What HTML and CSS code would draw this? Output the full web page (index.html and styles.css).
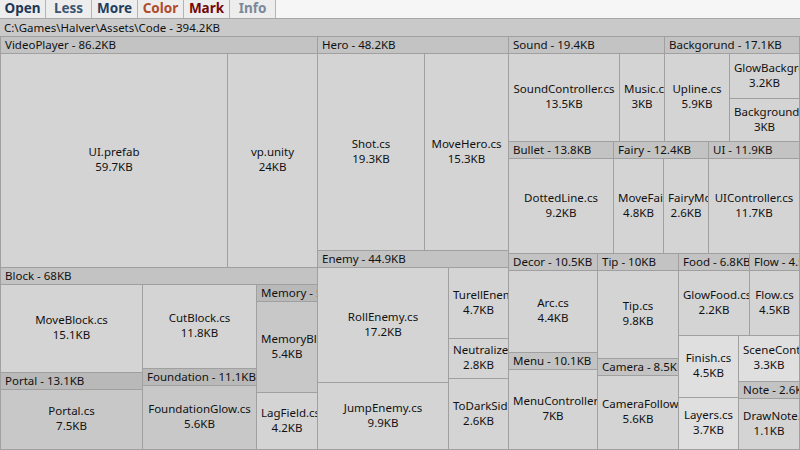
FILE: index.html
```html
<!DOCTYPE html>
<html>
<head>
<meta charset="utf-8">
<link rel="stylesheet" href="styles.css">
</head>
<body>
<div class="toolbar">
  <div class="btn c-open">Open</div>
  <div class="btn c-less">Less</div>
  <div class="btn c-more">More</div>
  <div class="btn c-color">Color</div>
  <div class="btn c-mark">Mark</div>
  <div class="btn c-info">Info</div>
</div>
<div class="path">C:\Games\Halver\Assets\Code - 394.2KB</div>
<div class="map">
  <div class="col" style="flex-basis:317px">
    <div class="grp" style="flex-basis:231px">
      <div class="hd">VideoPlayer - 86.2KB</div>
      <div class="body row">
        <div class="leaf" style="flex-basis:227px"><div>UI.prefab</div><div>59.7KB</div></div>
        <div class="leaf" style="flex-basis:90px"><div>vp.unity</div><div>24KB</div></div>
      </div>
    </div>
    <div class="grp" style="flex-basis:182px">
      <div class="hd">Block - 68KB</div>
      <div class="body row">
        <div class="col" style="flex-basis:142px">
          <div class="leaf" style="flex-basis:88px"><div>MoveBlock.cs</div><div>15.1KB</div></div>
          <div class="grp" style="flex-basis:77px">
            <div class="hd d2">Portal - 13.1KB</div>
            <div class="leaf d3"><div>Portal.cs</div><div>7.5KB</div></div>
          </div>
        </div>
        <div class="col" style="flex-basis:114px">
          <div class="leaf" style="flex-basis:84px"><div>CutBlock.cs</div><div>11.8KB</div></div>
          <div class="grp" style="flex-basis:81px">
            <div class="hd d2">Foundation - 11.1KB</div>
            <div class="leaf d3"><div>FoundationGlow.cs</div><div>5.6KB</div></div>
          </div>
        </div>
        <div class="col" style="flex-basis:61px">
          <div class="grp" style="flex-basis:108px">
            <div class="hd d2">Memory - 5.4KB</div>
            <div class="leaf d3"><div>MemoryBlock.cs</div><div>5.4KB</div></div>
          </div>
          <div class="leaf" style="flex-basis:57px"><div>LagField.cs</div><div>4.2KB</div></div>
        </div>
      </div>
    </div>
  </div>
  <div class="col" style="flex-basis:191px">
    <div class="grp" style="flex-basis:214px">
      <div class="hd">Hero - 48.2KB</div>
      <div class="body row">
        <div class="leaf" style="flex-basis:107px"><div>Shot.cs</div><div>19.3KB</div></div>
        <div class="leaf" style="flex-basis:84px"><div>MoveHero.cs</div><div>15.3KB</div></div>
      </div>
    </div>
    <div class="grp" style="flex-basis:199px">
      <div class="hd">Enemy - 44.9KB</div>
      <div class="body row">
        <div class="col" style="flex-basis:131px">
          <div class="leaf" style="flex-basis:115px"><div>RollEnemy.cs</div><div>17.2KB</div></div>
          <div class="leaf" style="flex-basis:67px"><div>JumpEnemy.cs</div><div>9.9KB</div></div>
        </div>
        <div class="col" style="flex-basis:60px">
          <div class="leaf" style="flex-basis:71px"><div>TurellEnemy.cs</div><div>4.7KB</div></div>
          <div class="leaf" style="flex-basis:40px"><div>Neutralizer.cs</div><div>2.8KB</div></div>
          <div class="leaf" style="flex-basis:71px"><div>ToDarkSide.cs</div><div>2.6KB</div></div>
        </div>
      </div>
    </div>
  </div>
  <div class="col" style="flex-basis:291px">
    <div class="row" style="flex-basis:105px">
      <div class="grp" style="flex-basis:156px">
        <div class="hd">Sound - 19.4KB</div>
        <div class="body row">
          <div class="leaf" style="flex-basis:111px"><div>SoundController.cs</div><div>13.5KB</div></div>
          <div class="leaf" style="flex-basis:45px"><div>Music.cs</div><div>3KB</div></div>
        </div>
      </div>
      <div class="grp" style="flex-basis:135px">
        <div class="hd">Backgorund - 17.1KB</div>
        <div class="body row">
          <div class="leaf" style="flex-basis:65px"><div>Upline.cs</div><div>5.9KB</div></div>
          <div class="col" style="flex-basis:70px">
            <div class="leaf" style="flex-basis:45px"><div>GlowBackground.cs</div><div>3.2KB</div></div>
            <div class="leaf" style="flex-basis:43px"><div>Background.cs</div><div>3KB</div></div>
          </div>
        </div>
      </div>
    </div>
    <div class="row" style="flex-basis:112px">
      <div class="grp" style="flex-basis:105px">
        <div class="hd">Bullet - 13.8KB</div>
        <div class="leaf"><div>DottedLine.cs</div><div>9.2KB</div></div>
      </div>
      <div class="grp" style="flex-basis:95px">
        <div class="hd">Fairy - 12.4KB</div>
        <div class="body row">
          <div class="leaf" style="flex-basis:50px"><div>MoveFairy.cs</div><div>4.8KB</div></div>
          <div class="leaf" style="flex-basis:45px"><div>FairyMove.cs</div><div>2.6KB</div></div>
        </div>
      </div>
      <div class="grp" style="flex-basis:91px">
        <div class="hd">UI - 11.9KB</div>
        <div class="leaf"><div>UIController.cs</div><div>11.7KB</div></div>
      </div>
    </div>
    <div class="row" style="flex-basis:196px">
      <div class="col" style="flex-basis:89px">
        <div class="grp" style="flex-basis:99px">
          <div class="hd">Decor - 10.5KB</div>
          <div class="leaf"><div>Arc.cs</div><div>4.4KB</div></div>
        </div>
        <div class="grp" style="flex-basis:97px">
          <div class="hd">Menu - 10.1KB</div>
          <div class="leaf"><div>MenuController.cs</div><div>7KB</div></div>
        </div>
      </div>
      <div class="col" style="flex-basis:81px">
        <div class="grp" style="flex-basis:105px">
          <div class="hd">Tip - 10KB</div>
          <div class="leaf"><div>Tip.cs</div><div>9.8KB</div></div>
        </div>
        <div class="grp" style="flex-basis:91px">
          <div class="hd">Camera - 8.5KB</div>
          <div class="leaf"><div>CameraFollow.cs</div><div>5.6KB</div></div>
        </div>
      </div>
      <div class="col" style="flex-basis:121px">
        <div class="row" style="flex-basis:82px">
          <div class="grp" style="flex-basis:71px">
            <div class="hd">Food - 6.8KB</div>
            <div class="leaf"><div>GlowFood.cs</div><div>2.2KB</div></div>
          </div>
          <div class="grp" style="flex-basis:50px">
            <div class="hd">Flow - 4.5KB</div>
            <div class="leaf"><div>Flow.cs</div><div>4.5KB</div></div>
          </div>
        </div>
        <div class="row" style="flex-basis:114px">
          <div class="col" style="flex-basis:60px">
            <div class="leaf d0" style="flex-basis:62px"><div>Finish.cs</div><div>4.5KB</div></div>
            <div class="leaf d0" style="flex-basis:52px"><div>Layers.cs</div><div>3.7KB</div></div>
          </div>
          <div class="col" style="flex-basis:61px">
            <div class="leaf d0" style="flex-basis:46px"><div>SceneController.cs</div><div>3.3KB</div></div>
            <div class="grp" style="flex-basis:68px">
              <div class="hd">Note - 2.6KB</div>
              <div class="leaf"><div>DrawNote.cs</div><div>1.1KB</div></div>
            </div>
          </div>
        </div>
      </div>
    </div>
  </div>
</div>
</body>
</html>
```
FILE: styles.css
```css
* { box-sizing: border-box; }
html, body {
  margin: 0;
  padding: 0;
  width: 800px;
  height: 450px;
  overflow: hidden;
  background: #d4d4d4;
  font-family: "Noto Sans", "Open Sans", sans-serif;
  font-size: 11.5px;
  color: #111111;
}
.toolbar {
  display: flex;
  height: 19px;
  background: #f6f6f6;
  border-bottom: 1px solid #a8a8a8;
}
.btn {
  width: 46px;
  height: 18px;
  line-height: 17px;
  text-align: center;
  font-weight: 700;
  font-size: 13.5px;
  background: #ededed;
  border-right: 1px solid #b4b4b4;
}
.c-open { color: #1d3857; }
.c-less { color: #3a5572; }
.c-more { color: #223e5e; }
.c-color { color: #b04b2b; }
.c-mark { color: #740808; }
.c-info { color: #7a8899; }
.path {
  height: 18px;
  line-height: 17px;
  padding-left: 4px;
  background: #c9c9c9;
  border-bottom: 1px solid #a0a0a0;
  white-space: nowrap;
}
.map {
  display: flex;
  height: 413px;
  border-left: 1px solid #a0a0a0;
}
.row, .col, .grp {
  display: flex;
  flex-grow: 0;
  flex-shrink: 0;
  min-width: 0;
  min-height: 0;
}
.row { flex-direction: row; }
.col, .grp { flex-direction: column; }
.body {
  flex: 1 1 0;
  min-height: 0;
}
.hd {
  flex: 0 0 17px;
  height: 17px;
  line-height: 16px;
  padding-left: 4px;
  background: #c3c3c3;
  border-right: 1px solid #a0a0a0;
  border-bottom: 1px solid #a0a0a0;
  white-space: nowrap;
  overflow: hidden;
}
.hd.d2 { background: #b9b9b9; }
.leaf {
  flex: 1 1 0;
  display: flex;
  flex-direction: column;
  justify-content: center;
  min-width: 0;
  min-height: 0;
  padding: 0 4px 3px;
  background: #d4d4d4;
  border-right: 1px solid #a0a0a0;
  border-bottom: 1px solid #a0a0a0;
  overflow: hidden;
  text-align: center;
  white-space: nowrap;
  line-height: 15px;
}
.row > .leaf[style], .col > .leaf[style] { flex-grow: 0; flex-shrink: 0; }
.leaf.d3 { background: #c8c8c8; }
.leaf.d0 { background: #dfdfdf; }
```
